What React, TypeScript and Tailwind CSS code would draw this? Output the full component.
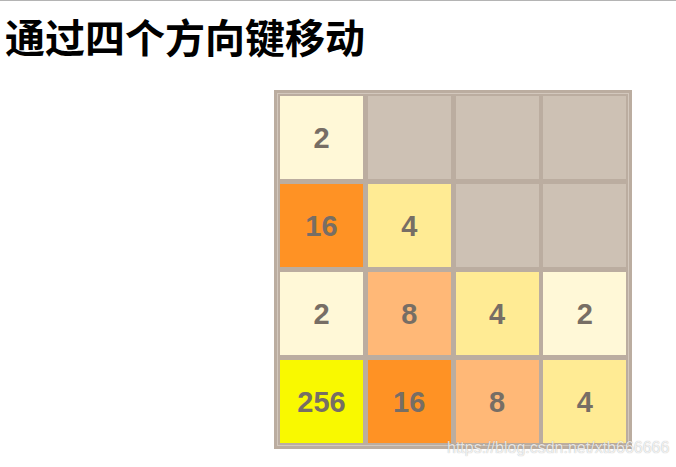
import React from 'react';

type Cell = number | null;

const board: Cell[][] = [
  [2, null, null, null],
  [16, 4, null, null],
  [2, 8, 4, 2],
  [256, 16, 8, 4],
];

// tile background by value
const tileBg: Record<number, string> = {
  2: 'bg-[#fff8d7]',
  4: 'bg-[#ffeb94]',
  8: 'bg-[#ffb877]',
  16: 'bg-[#ff9224]',
  256: 'bg-[#f9f900]',
};

function Tile({ value }: { value: Cell }) {
  const bg = value ? tileBg[value] : 'bg-[#cdc1b4]';
  return (
    <div className={`w-[83px] h-[83px] pt-[3px] flex items-center justify-center ${bg}`}>
      {value && (
        <span className="text-[29px] font-bold text-[#776e65] font-['Liberation_Sans',Arial,sans-serif]">
          {value}
        </span>
      )}
    </div>
  );
}

export default function App() {
  return (
    <div className="relative w-[676px] h-[467px] bg-white border-t border-[#b4b4b4] overflow-hidden">
      <h1 className="ml-[5px] mt-[11px] text-[40px] leading-[48px] font-bold text-black font-['Noto_Sans_CJK_SC',sans-serif]">
        通过四个方向键移动
      </h1>
      <div className="ml-[274px] mt-[30px] w-[358px] p-[3px] bg-[#bbada0]">
        <div className="border border-[#d3c8bd] p-[2px]">
          <div className="grid grid-cols-4 gap-[5px]">
            {board.flat().map((v, i) => (
              <Tile key={i} value={v} />
            ))}
          </div>
        </div>
      </div>
      <span className="absolute left-[447px] top-[435px] text-[16px] text-white/80 font-['Liberation_Sans',Arial,sans-serif] [text-shadow:0_0_1px_rgba(0,0,0,0.35)]">
        https://blog.csdn.net/xtb666666
      </span>
    </div>
  );
}
